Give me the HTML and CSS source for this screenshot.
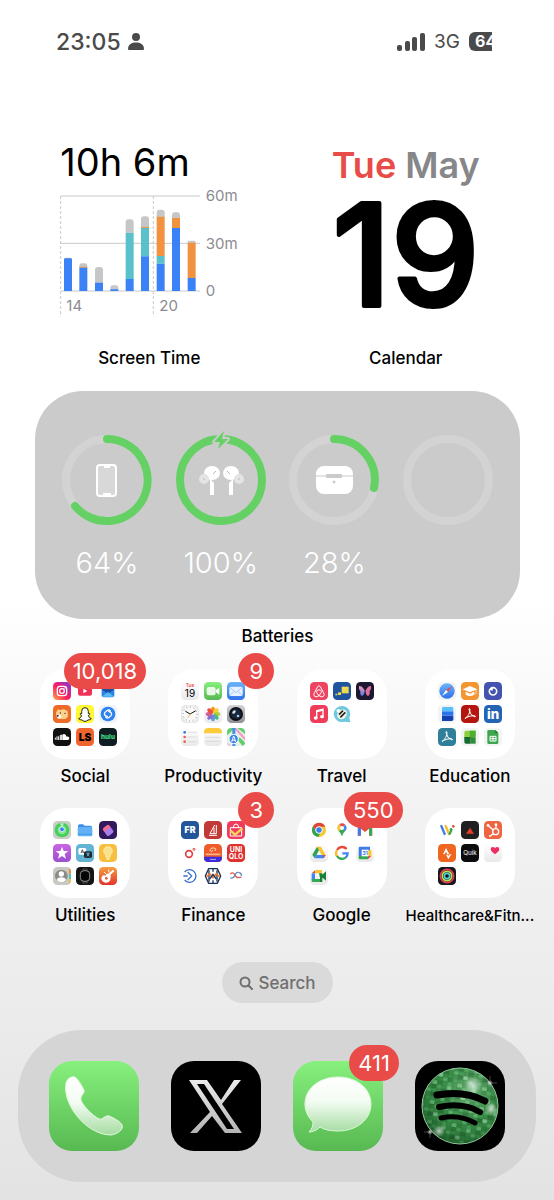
FILE: index.html
```html
<!DOCTYPE html>
<html lang="en">
<head>
<meta charset="utf-8">
<meta name="viewport" content="width=device-width, initial-scale=1">
<title>Home Screen</title>
<link rel="stylesheet" href="styles.css">
</head>
<body>
<svg class="defs" aria-hidden="true">
  <defs>
    <linearGradient id="insta" x1="0" y1="1" x2="1" y2="0"><stop offset="0" stop-color="#fcb045"/><stop offset=".45" stop-color="#fd1d5d"/><stop offset="1" stop-color="#7a3ae0"/></linearGradient>
    <linearGradient id="green" x1="0" y1="0" x2="0" y2="1"><stop offset="0" stop-color="#86f07d"/><stop offset="1" stop-color="#58b952"/></linearGradient>
    <linearGradient id="blue" x1="0" y1="0" x2="0" y2="1"><stop offset="0" stop-color="#6db4fa"/><stop offset="1" stop-color="#2f72ea"/></linearGradient>
    <linearGradient id="paper" x1="0" y1="0" x2="0" y2="1"><stop offset="0" stop-color="#fff"/><stop offset="1" stop-color="#e9e9ea"/></linearGradient>
    <linearGradient id="silver" x1="0" y1="0" x2="0" y2="1"><stop offset="0" stop-color="#d5d5d8"/><stop offset="1" stop-color="#8f8f95"/></linearGradient>
    <linearGradient id="glass" x1="0" y1="0" x2="0" y2="1"><stop offset="0" stop-color="#fff"/><stop offset=".45" stop-color="#f3fcf2"/><stop offset="1" stop-color="#a5dca1"/></linearGradient>
    <linearGradient id="chrome" x1="0" y1="0" x2="0" y2="1"><stop offset="0" stop-color="#ececec"/><stop offset="1" stop-color="#b4b4b4"/></linearGradient>
    <linearGradient id="violet" x1="0" y1="0" x2="0" y2="1"><stop offset="0" stop-color="#c964e4"/><stop offset="1" stop-color="#9a4fd0"/></linearGradient>
    <linearGradient id="wing" x1="0" y1="0" x2="0" y2="1"><stop offset="0" stop-color="#f79ab0"/><stop offset="1" stop-color="#5577f0"/></linearGradient>
    <linearGradient id="garage" x1="0" y1="0" x2="0" y2="1"><stop offset="0" stop-color="#f5a040"/><stop offset="1" stop-color="#e2342c"/></linearGradient>
    <radialGradient id="ball" cx=".62" cy=".32" r=".8"><stop offset="0" stop-color="#bff5c8" stop-opacity=".45"/><stop offset=".5" stop-color="#3f9e50" stop-opacity=".2"/><stop offset="1" stop-color="#03260c" stop-opacity=".65"/></radialGradient>
    <radialGradient id="glow"><stop offset="0" stop-color="#fff" stop-opacity=".7"/><stop offset="1" stop-color="#fff" stop-opacity="0"/></radialGradient>
    <pattern id="tiles" width="25" height="20" patternUnits="userSpaceOnUse" patternTransform="rotate(8)">
      <rect width="25" height="20" fill="#348643"/>
      <rect width="5" height="4" fill="#4ba25b"/><rect x="10" width="5" height="4" fill="#7cc188"/><rect x="20" width="5" height="4" fill="#26702f"/>
      <rect x="5" y="4" width="5" height="4" fill="#246630"/><rect x="15" y="4" width="5" height="4" fill="#5eb26d"/><rect x="20" y="4" width="5" height="4" fill="#3b9149"/>
      <rect y="8" width="5" height="4" fill="#8fd09a"/><rect x="10" y="8" width="5" height="4" fill="#2e8c40"/><rect x="20" y="8" width="5" height="4" fill="#215f2c"/>
      <rect x="5" y="12" width="5" height="4" fill="#57ad66"/><rect x="10" y="12" width="5" height="4" fill="#266b33"/><rect x="15" y="12" width="5" height="4" fill="#3d984c"/>
      <rect y="16" width="5" height="4" fill="#2a7638"/><rect x="10" y="16" width="5" height="4" fill="#48a058"/><rect x="20" y="16" width="5" height="4" fill="#6bb878"/>
      <path d="M0 0H25M0 4H25M0 8H25M0 12H25M0 16H25M0 0V20M5 0V20M10 0V20M15 0V20M20 0V20" stroke="#1b5527" stroke-width=".4"/>
    </pattern>
    <g id="petals">
      <ellipse cx="27" cy="15" rx="6" ry="10" fill="#f7941d"/>
      <ellipse cx="27" cy="15" rx="6" ry="10" fill="#f4d035" transform="rotate(45 27 27)"/>
      <ellipse cx="27" cy="15" rx="6" ry="10" fill="#b0cf3a" transform="rotate(90 27 27)"/>
      <ellipse cx="27" cy="15" rx="6" ry="10" fill="#4fb783" transform="rotate(135 27 27)"/>
      <ellipse cx="27" cy="15" rx="6" ry="10" fill="#5b9be0" transform="rotate(180 27 27)"/>
      <ellipse cx="27" cy="15" rx="6" ry="10" fill="#8a6fd0" transform="rotate(225 27 27)"/>
      <ellipse cx="27" cy="15" rx="6" ry="10" fill="#d15c9f" transform="rotate(270 27 27)"/>
      <ellipse cx="27" cy="15" rx="6" ry="10" fill="#ee4e3e" transform="rotate(315 27 27)"/>
    </g>
  </defs>
</svg>

<header class="status">
  <time class="status-time">23:05</time>
  <svg class="person" viewBox="0 0 16 17" aria-label="Focus"><circle cx="8" cy="4" r="4"/><path d="M0 16C0 11 4 9.500 8 9.500S16 11 16 16Q16 17 15 17H1Q0 17 0 16Z"/></svg>
  <div class="status-right">
    <svg class="signal" viewBox="0 0 28 18" aria-label="Signal"><rect y="12" width="5" height="6" rx="2"/><rect x="8" y="8" width="5" height="10" rx="2"/><rect x="15" y="4" width="5" height="14" rx="2"/><rect x="23" width="5" height="18" rx="2"/></svg>
    <span class="network">3G</span>
    <span class="battery">64</span>
  </div>
</header>

<main class="home">
  <section class="widgets">
    <figure class="cell">
      <div class="widget screen-time">
        <div class="total">10h 6m</div>
        <svg class="chart" viewBox="0 -18 567 402" role="img" aria-label="Usage per day">
          <path class="grid-line" d="M2 15H420M2 157H420M2 300H420"/>
          <path class="grid-dash" d="M2 15V376M280 15V376"/>
          <path class="other" d="M12 212V206Q12 200 18 200H30Q36 200 36 206V212ZM58 230V224Q58 217 65 217H75Q82 217 82 224V230ZM105 276V237Q105 228 114 228H120Q129 228 129 237V276ZM151 296V290Q151 283 158 283H168Q175 283 175 290V296ZM197 126V94Q197 85 206 85H212Q221 85 221 94V126ZM243 110V85Q243 76 252 76H258Q267 76 267 85V110ZM290 78V65Q290 56 299 56H305Q314 56 314 65V78ZM336 82V73Q336 64 345 64H351Q360 64 360 73V82ZM383 156V153Q383 149 389 149H401Q407 149 407 153V156Z"/>
          <path class="teal" d="M197 126H221V265H197ZM243 111H267V196H243ZM290 195H314V218H290Z"/>
          <path class="orange" d="M58 227H82V230H58ZM243 108H267V111H243ZM290 77H314V195H290ZM336 81H360V111H336ZM383 155H407V261H383Z"/>
          <path class="use" d="M12 300V206Q12 202 16 202H32Q36 202 36 206V300ZM58 230H82V300H58ZM105 275H129V300H105ZM151 295H175V300H151ZM197 264H221V300H197ZM243 196H267V300H243ZM290 218H314V300H290ZM336 111H360V300H336ZM383 261H407V300H383Z"/>
          <text x="437" y="31">60m</text><text x="437" y="174">30m</text><text x="437" y="316">0</text>
          <text x="19" y="361">14</text><text x="298" y="361">20</text>
        </svg>
      </div>
      <figcaption class="label">Screen Time</figcaption>
    </figure>
    <figure class="cell">
      <div class="widget calendar">
        <div class="month"><span class="weekday">Tue</span> May</div>
        <svg class="day" viewBox="0 0 228 130"><text x="114" y="118">19</text></svg>
      </div>
      <figcaption class="label">Calendar</figcaption>
    </figure>
  </section>

  <figure class="cell batteries-cell">
    <div class="batteries">
      <div class="device">
        <svg class="ring" viewBox="0 0 90 90" aria-hidden="true"><circle class="track" cx="45" cy="45" r="41"/><path class="level" d="M45 4A41 41 0 1 1 13 71"/><rect x="35" y="30" width="19" height="31" rx="3" fill="#d8d8d8" stroke="#fff" stroke-width="2"/><path d="M42 32H48M41 59H49" stroke="#fff" stroke-width="2"/></svg>
        <span class="percent">64%</span>
      </div>
      <div class="device">
        <svg class="ring" viewBox="0 0 90 90" aria-hidden="true"><circle class="level" cx="45" cy="45" r="41"/>
          <path class="bolt" d="M48-4 38 7H44L42 14 52 4H46Z"/>
          <g id="bud"><ellipse cx="36" cy="38" rx="8" ry="7" fill="#fff"/><path d="M34 44Q38 48 38 48V60H34Z" fill="#fff"/><circle cx="28" cy="44" r="5" fill="#e4e4e4"/><path d="M37 39 40 36M27 43 29 45" stroke="#bbb" stroke-width="1"/></g>
          <use href="#bud" transform="translate(91 0) scale(-1 1)"/></svg>
        <span class="percent">100%</span>
      </div>
      <div class="device">
        <svg class="ring" viewBox="0 0 90 90" aria-hidden="true"><circle class="track" cx="45" cy="45" r="41"/><path class="level" d="M45 4A41 41 0 0 1 85 53"/><rect x="27" y="31" width="37" height="28" rx="8" fill="#fff"/><path d="M27 41H64" stroke="#cbcbcb"/><rect x="37" y="39" width="16" height="4" rx="1" fill="#cbcbcb"/><circle cx="45" cy="47" r="1.500" fill="#cbcbcb"/></svg>
        <span class="percent">28%</span>
      </div>
      <div class="device">
        <svg class="ring" viewBox="0 0 90 90" aria-hidden="true"><circle class="track" cx="45" cy="45" r="41"/></svg>
      </div>
    </div>
    <figcaption class="label">Batteries</figcaption>
  </figure>

  <nav class="folders" aria-label="Folders">
    <button class="cell" type="button">
      <span class="folder">
        <svg viewBox="0 0 54 54"><rect width="54" height="54" rx="13" fill="url(#insta)"/><rect x="13" y="13" width="28" height="28" rx="8" fill="none" stroke="#fff" stroke-width="4"/><circle cx="27" cy="27" r="7" fill="none" stroke="#fff" stroke-width="4"/><circle cx="36" cy="18" r="2" fill="#fff"/></svg>
        <svg viewBox="0 0 54 54"><path d="M6 12H48V35Q48 41 42 41H12Q6 41 6 35Z" fill="#ef3356"/><path d="M22 20 34 27 22 34Z" fill="#fff"/></svg>
        <svg viewBox="0 0 54 54"><path d="M8 14H46V40Q46 46 40 46H14Q8 46 8 40Z" fill="#2a84e6"/><path d="M8 22 27 36 46 22V14H8Z" fill="#1b4fa0"/><path d="M8 44 27 30 46 44Z" fill="#55bdf5"/></svg>
        <svg viewBox="0 0 54 54"><rect width="54" height="54" rx="13" fill="#ee6a28"/><path d="M9 23 15 13 22 16Q32 9 38 16Q45 16 44 24Q48 38 36 42H21Q10 40 10 29Z" fill="#fbd28b"/><path d="M10 30Q18 25 25 33 24 41 15 41Z" fill="#fff"/><circle cx="22" cy="24" r="2" fill="#43220e"/><circle cx="36" cy="25" r="2" fill="#43220e"/><circle cx="14" cy="32" r="3" fill="#43220e"/></svg>
        <svg viewBox="0 0 54 54"><rect width="54" height="54" rx="13" fill="#fdf735"/><path d="M27 8Q37 8 37 19V26Q43 24 41 29L37 32Q39 39 46 41 42 45 36 45 32 49 27 49 22 49 18 45 12 45 8 41 15 39 17 32L13 29Q11 24 17 26V19Q17 8 27 8Z" fill="#fff" stroke="#222" stroke-width="3" stroke-linejoin="round"/></svg>
        <svg viewBox="0 0 54 54"><rect width="54" height="54" rx="13" fill="#eef3fb"/><circle cx="27" cy="27" r="22" fill="#2c82ee"/><path d="M25 34Q12 31 18 22L25 16Q31 13 34 18M29 20Q42 23 36 32L29 38Q23 41 20 36" fill="none" stroke="#fff" stroke-width="4" stroke-linecap="round"/></svg>
        <svg viewBox="0 0 54 54"><rect width="54" height="54" rx="13" fill="#111"/><path d="M28 36V20Q37 14 41 26 49 24 49 31 49 36 44 36Z" fill="#fff"/><path d="M7 29V35M12 25V36M17 25V36M22 21V36M26 20V36" stroke="#fff" stroke-width="3"/></svg>
        <svg viewBox="0 0 54 54"><rect width="54" height="54" rx="13" fill="#f0642e"/><text class="t-ls" x="27" y="38">LS</text></svg>
        <svg viewBox="0 0 54 54"><rect width="54" height="54" rx="13" fill="#101d22"/><text class="t-hulu" x="27" y="32">hulu</text></svg>
        <span class="badge">10,018</span>
      </span>
      <span class="label">Social</span>
    </button>

    <button class="cell" type="button">
      <span class="folder">
        <svg viewBox="0 0 54 54"><rect width="54" height="54" rx="13" fill="url(#paper)"/><text class="t-tue" x="27" y="15">Tue</text><text class="t-19" x="27" y="44">19</text></svg>
        <svg viewBox="0 0 54 54"><rect width="54" height="54" rx="13" fill="url(#green)"/><rect x="8" y="15" width="27" height="25" rx="7" fill="#e9fbe8"/><path d="M36 24 46 17V38L36 31Z" fill="#fff"/></svg>
        <svg viewBox="0 0 54 54"><rect width="54" height="54" rx="13" fill="url(#blue)"/><rect x="7" y="14" width="40" height="28" rx="5" fill="#e6f2ff"/><path d="M8 16 27 32 46 16M8 41 21 28M46 41 33 28" fill="none" stroke="#8cb9ef" stroke-width="2"/></svg>
        <svg viewBox="0 0 54 54"><rect width="54" height="54" rx="13" fill="#e9e9ea"/><circle cx="27" cy="27" r="24" fill="#fafafa"/><circle cx="27" cy="27" r="21" fill="none" stroke="#555" stroke-width="3" stroke-dasharray="2 9"/><path d="M14 19 27 27 43 18" fill="none" stroke="#111" stroke-width="3" stroke-linecap="round"/><path d="M30 24 20 39" stroke="#ef9a2d" stroke-width="2"/></svg>
        <svg viewBox="0 0 54 54"><rect width="54" height="54" rx="13" fill="url(#paper)"/><use href="#petals"/></svg>
        <svg viewBox="0 0 54 54"><rect width="54" height="54" rx="13" fill="url(#silver)"/><circle cx="27" cy="27" r="21" fill="#101217"/><circle cx="27" cy="27" r="15" fill="#16273b"/><ellipse cx="21" cy="21" rx="6" ry="4" fill="#d6e6f5" transform="rotate(-45 21 21)"/><circle cx="33" cy="33" r="4" fill="#a9c5e4"/></svg>
        <svg viewBox="0 0 54 54"><rect width="54" height="54" rx="13" fill="url(#paper)"/><circle cx="11" cy="13" r="4" fill="#3076e8"/><circle cx="11" cy="27" r="4" fill="#e5654f"/><circle cx="11" cy="41" r="4" fill="#e5654f"/><path d="M20 13H48M20 27H48M20 41H48" stroke="#d2d2d4" stroke-width="2"/></svg>
        <svg viewBox="0 0 54 54"><rect width="54" height="54" rx="13" fill="url(#paper)"/><path d="M0 16V13Q0 0 13 0H41Q54 0 54 13V16Z" fill="#fccb3c"/><path d="M6 28H48M6 40H48" stroke="#cfcfd2" stroke-width="2"/></svg>
        <svg viewBox="0 0 54 54"><rect width="54" height="54" rx="13" fill="#e6efe4"/><path d="M13 0H25L0 22V13Q0 0 13 0ZM31 0H43Q54 2 54 13V18Z" fill="#5fcf6b"/><path d="M28 0 54 28V38L20 0ZM0 44 12 54Q0 54 0 41Z" fill="#f09bc9"/><path d="M38 28 54 44V48L47 54 32 36Z" fill="#5fcf6b"/><path d="M16 0H25V54H16Z" fill="#3f8df2"/><circle cx="20" cy="33" r="14" fill="#3a86ee" stroke="#fff" stroke-width="3"/><path d="M20 24 26 40 20 36 14 40Z" fill="none" stroke="#fff" stroke-width="3" stroke-linejoin="round"/></svg>
        <span class="badge">9</span>
      </span>
      <span class="label">Productivity</span>
    </button>

    <button class="cell" type="button">
      <span class="folder">
        <svg viewBox="0 0 54 54"><rect width="54" height="54" rx="13" fill="#ee4461"/><path d="M27 41Q16 29 22 25 27 22 32 25 38 29 27 41 17 49 12 41 10 38 14 31L23 14Q27 8 31 14L40 31Q44 38 42 41 37 49 27 41Z" fill="none" stroke="#fff" stroke-width="3"/></svg>
        <svg viewBox="0 0 54 54"><rect width="54" height="54" rx="13" fill="#20549f"/><rect x="26" y="14" width="21" height="20" fill="#efd94e"/><rect x="15" y="31" width="9" height="8" fill="#efd94e"/><rect x="7" y="35" width="6" height="5" fill="#d0cf70"/></svg>
        <svg viewBox="0 0 54 54"><rect width="54" height="54" rx="13" fill="#1c1830"/><path d="M26 25Q18 11 9 12 7 20 13 28 11 37 17 42 25 40 26 28Z" fill="url(#wing)"/><path d="M29 25Q36 11 45 12 47 20 41 28 43 37 37 42 29 40 29 28Z" fill="#df6f9c"/></svg>
        <svg viewBox="0 0 54 54"><rect width="54" height="54" rx="13" fill="#ef3c59"/><path d="M20 39V17L39 12V34" fill="none" stroke="#fff" stroke-width="4"/><path d="M20 20 39 15" stroke="#fff" stroke-width="4"/><ellipse cx="17" cy="39" rx="6" ry="5" fill="#fff"/><ellipse cx="36" cy="35" rx="6" ry="5" fill="#fff"/></svg>
        <svg viewBox="0 0 54 54"><path d="M27 3A24 24 0 1 0 33 50L52 52 49 38A24 24 0 0 0 27 3Z" fill="#6ec9de"/><ellipse cx="27" cy="28" rx="13" ry="16" fill="#f8f5e6" transform="rotate(45 27 28)"/><path d="M18 29 30 17M22 37 37 22" stroke="#222" stroke-width="5"/><path d="M11 14Q17 9 22 16L15 23Q9 20 11 14Z" fill="#fff"/></svg>
      </span>
      <span class="label">Travel</span>
    </button>

    <button class="cell" type="button">
      <span class="folder">
        <svg viewBox="0 0 54 54"><rect width="54" height="54" rx="13" fill="#f4f4f5"/><circle cx="27" cy="27" r="23" fill="url(#blue)"/><path d="M42 12 30 30 24 24Z" fill="#ec4a3e"/><path d="M12 42 24 24 30 30Z" fill="#fff"/></svg>
        <svg viewBox="0 0 54 54"><rect width="54" height="54" rx="13" fill="#f39530"/><path d="M5 22 27 12 49 22 27 31Z" fill="#fff"/><path d="M14 29V38Q27 46 40 38V29L27 35Z" fill="#fff"/><path d="M45 24V37" stroke="#fff" stroke-width="2"/></svg>
        <svg viewBox="0 0 54 54"><rect width="54" height="54" rx="13" fill="#4453b0"/><circle cx="27" cy="28" r="11" fill="none" stroke="#fff" stroke-width="5"/><path d="M16 22 27 28 26 16" fill="#fff"/><circle cx="30" cy="25" r="4" fill="#4453b0"/></svg>
        <svg viewBox="0 0 54 54"><rect width="54" height="54" rx="13" fill="#f1f3f6"/><path d="M15 6H42Q46 6 46 12V19H12V11Q12 6 15 6Z" fill="#58c0f7"/><path d="M12 19H46V32H12Z" fill="#2b75ea"/><path d="M12 32H46V43Q46 48 41 48H12Z" fill="#163fb4"/></svg>
        <svg viewBox="0 0 54 54"><rect width="54" height="54" rx="13" fill="#b4160f"/><path d="M12 41Q27 30 27 12 24 8 24 14 27 31 42 36 46 34 40 32 26 32 15 38 10 42 12 41Z" fill="none" stroke="#fff" stroke-width="3"/></svg>
        <svg viewBox="0 0 54 54"><rect width="54" height="54" rx="13" fill="#2563b5"/><text class="t-in" x="27" y="42">in</text></svg>
        <svg viewBox="0 0 54 54"><rect width="54" height="54" rx="13" fill="#2f7f9b"/><path d="M12 41Q27 30 27 12 24 8 24 14 27 31 42 36 46 34 40 32 26 32 15 38 10 42 12 41Z" fill="none" stroke="#fff" stroke-width="3"/></svg>
        <svg viewBox="0 0 54 54"><rect width="54" height="54" rx="13" fill="#f1f4f0"/><path d="M14 8H44V25L34 34H10V12Z" fill="#8ed03a"/><path d="M26 8H44V28H26Z" fill="#4fae34"/><path d="M10 27H29V47H15Q10 47 10 42Z" fill="#176b32"/><path d="M29 28H44V47H29Z" fill="#2f8c3b"/></svg>
        <svg viewBox="0 0 54 54"><rect width="54" height="54" rx="13" fill="#f3f5f3"/><path d="M14 6H34L43 15V44Q43 48 39 48H14Q10 48 10 44V10Q10 6 14 6Z" fill="#3fa650"/><path d="M34 6 43 15H34Z" fill="#1d7a36"/><path d="M18 25H36V39H18ZM18 32H36M27 25V39" fill="none" stroke="#fff" stroke-width="3"/></svg>
      </span>
      <span class="label">Education</span>
    </button>

    <button class="cell" type="button">
      <span class="folder">
        <svg viewBox="0 0 54 54"><rect width="54" height="54" rx="13" fill="#c9cdc6"/><circle cx="27" cy="27" r="22" fill="#45cf5b"/><circle cx="27" cy="27" r="13" fill="#8be597"/><path d="M21 7H33L27 22Z" fill="#b7f1bd"/><circle cx="27" cy="25" r="7" fill="#2f83ea" stroke="#fff" stroke-width="2"/></svg>
        <svg viewBox="0 0 54 54"><path d="M6 15Q6 10 11 10H21L26 14H44Q48 14 48 19V24H6Z" fill="#3b8fe8"/><rect x="5" y="18" width="44" height="28" rx="5" fill="#62b1f6"/><path d="M6 40H48" stroke="#3c8ee2" stroke-width="2"/></svg>
        <svg viewBox="0 0 54 54"><rect width="54" height="54" rx="13" fill="#31195e"/><rect x="13" y="13" width="24" height="18" rx="6" fill="#ee6d93" transform="rotate(-38 27 24)"/><rect x="18" y="24" width="24" height="18" rx="6" fill="#a77cec" transform="rotate(-38 30 32)"/></svg>
        <svg viewBox="0 0 54 54"><rect width="54" height="54" rx="13" fill="url(#violet)"/><path d="M27 8 32 21H46L35 30 39 44 27 36 15 44 19 30 8 21H22Z" fill="#fff"/></svg>
        <svg viewBox="0 0 54 54"><rect width="54" height="54" rx="13" fill="#62b3d4"/><rect x="7" y="12" width="24" height="20" rx="5" fill="#fff"/><rect x="24" y="22" width="24" height="20" rx="5" fill="#1c2b35"/><path d="M15 27 19 17 23 27M16 24H22" stroke="#224" stroke-width="2" fill="none"/><path d="M31 28H41M36 25V28M32 37 40 29M32 29 40 37" stroke="#7fd4f1" stroke-width="2"/></svg>
        <svg viewBox="0 0 54 54"><rect width="54" height="54" rx="13" fill="#f6bf3d"/><path d="M27 8A13 13 0 0 1 34 32V38H20V32A13 13 0 0 1 27 8Z" fill="#fbe08c" stroke="#fff3c4" stroke-width="2"/><path d="M21 42H33M23 46H31" stroke="#fff3c4" stroke-width="3"/></svg>
        <svg viewBox="0 0 54 54"><rect width="54" height="54" rx="13" fill="#c9c9c2"/><path d="M48 4Q54 7 54 13V20H48Z" fill="#ee8e3c"/><path d="M48 20H54V36H48Z" fill="#53c5b8"/><path d="M48 36H54V42Q53 48 48 51Z" fill="#e9c247"/><circle cx="25" cy="27" r="19" fill="#8b8b88"/><circle cx="25" cy="21" r="8" fill="#fff"/><path d="M11 39Q13 31 25 31T39 39Q34 46 25 46T11 39Z" fill="#fff"/></svg>
        <svg viewBox="0 0 54 54"><rect width="54" height="54" rx="13" fill="#141414"/><path d="M19 4H35L37 13H17ZM17 41H37L35 50H19Z" fill="#333"/><rect x="13" y="11" width="28" height="32" rx="11" fill="#050505" stroke="#8f8f8f" stroke-width="3"/></svg>
        <svg viewBox="0 0 54 54"><rect width="54" height="54" rx="13" fill="url(#garage)"/><path d="M8 29Q13 22 20 26 23 18 28 20L42 8 46 12 34 24Q38 26 34 33 37 39 29 45 17 50 10 42 5 36 8 29Z" fill="#fff"/><circle cx="22" cy="34" r="4" fill="#e45331"/><path d="M15 15 22 22M29 8 30 16" stroke="#fff" stroke-width="3"/></svg>
      </span>
      <span class="label">Utilities</span>
    </button>

    <button class="cell" type="button">
      <span class="folder">
        <svg viewBox="0 0 54 54"><rect width="54" height="54" rx="13" fill="#23559b"/><text class="t-fr" x="27" y="36">FR</text></svg>
        <svg viewBox="0 0 54 54"><rect width="54" height="54" rx="13" fill="#c23a37"/><path d="M32 12 18 38H37V12" fill="none" stroke="#fff" stroke-width="3"/><path d="M30 20V37M15 43H39" stroke="#fff" stroke-width="3"/></svg>
        <svg viewBox="0 0 54 54"><rect width="54" height="54" rx="13" fill="#ee3c5c"/><path d="M10 20H44V45H10Z" fill="none" stroke="#fff" stroke-width="3"/><path d="M19 20Q19 9 27 9T35 20" fill="none" stroke="#fff" stroke-width="3"/><path d="M11 29 24 41 46 22" fill="none" stroke="#f6d35b" stroke-width="7"/></svg>
        <svg viewBox="0 0 54 54"><circle cx="24" cy="30" r="10" fill="none" stroke="#e4403f" stroke-width="5"/><circle cx="39" cy="16" r="3" fill="none" stroke="#e4403f" stroke-width="3"/></svg>
        <svg viewBox="0 0 54 54"><rect width="54" height="54" rx="13" fill="#ee5c2b"/><path d="M0 38H54V41Q54 54 41 54H13Q0 54 0 41Z" fill="#3d2bd8"/><path d="M18 22Q18 11 29 12T32 21M26 18 22 24" fill="none" stroke="#ffe1c5" stroke-width="3"/><path d="M5 31H49" stroke="#f7b28c" stroke-width="5"/><path d="M18 46H36" stroke="#b7aff2" stroke-width="3"/></svg>
        <svg viewBox="0 0 54 54"><rect width="54" height="54" rx="13" fill="#df302c"/><text class="t-uni" x="27" y="25">UNI</text><text class="t-uni" x="27" y="46">QLO</text></svg>
        <svg viewBox="0 0 54 54"><path d="M11 15A19 19 0 1 1 11 39M7 27H20M20 15 32 27 20 39" fill="none" stroke="#3770c8" stroke-width="4"/></svg>
        <svg viewBox="0 0 54 54"><path d="M14 5H40L50 27 40 49H14L4 27Z" fill="none" stroke="#18335c" stroke-width="4"/><path d="M15 10V44M39 10V44M27 5V14M27 40V49" stroke="#18335c" stroke-width="4"/><path d="M7 30 17 20 27 32 37 20 47 30" fill="none" stroke="#ec7a35" stroke-width="5"/><path d="M17 36 27 22 37 36" fill="none" stroke="#18335c" stroke-width="4"/></svg>
        <svg viewBox="0 0 54 54"><path d="M10 21Q18 13 23 23T35 32 43 30" fill="none" stroke="#e05a4d" stroke-width="4"/><path d="M10 33Q20 35 24 24T37 17Q44 19 43 27" fill="none" stroke="#6d8fbd" stroke-width="4"/></svg>
        <span class="badge">3</span>
      </span>
      <span class="label">Finance</span>
    </button>

    <button class="cell" type="button">
      <span class="folder">
        <svg viewBox="0 0 54 54"><circle cx="27" cy="27" r="21" fill="#f7c92e"/><path d="M9 16A21 21 0 0 1 46 17H27L19 32Z" fill="#e04437"/><path d="M9 16 19 32 31 35 25 48A21 21 0 0 1 9 16Z" fill="#2fa352"/><circle cx="27" cy="27" r="10" fill="#3f7ee8" stroke="#fff" stroke-width="3"/></svg>
        <svg viewBox="0 0 54 54"><path d="M27 46Q24 36 17 30L27 21 38 28Q29 37 27 46Z" fill="#34a853"/><path d="M13 24A15 15 0 0 1 19 9L27 21 17 31Q13 28 13 24Z" fill="#f9c331"/><path d="M19 9A15 15 0 0 1 37 11L27 21Z" fill="#e84a3c"/><path d="M37 11A15 15 0 0 1 38 29L27 21Z" fill="#4285f4"/><circle cx="27" cy="21" r="6" fill="#fff"/></svg>
        <svg viewBox="0 0 54 54"><path d="M10 44V14L27 27 44 14V44" fill="none" stroke="#e84a3c" stroke-width="9"/><path d="M10 20V44" stroke="#3f7ee8" stroke-width="9"/><path d="M44 20V44" stroke="#34a853" stroke-width="9"/></svg>
        <svg viewBox="0 0 54 54"><rect width="54" height="54" rx="13" fill="url(#paper)"/><path d="M21 8H33L47 33H35Z" fill="#f9c331"/><path d="M21 8 27 19 14 43 7 32Z" fill="#2fa352"/><path d="M19 33H47L41 43H14Z" fill="#4285f4"/><path d="M40 33H47L41 43Z" fill="#e84a3c"/></svg>
        <svg viewBox="0 0 54 54"><path d="M41 15A18 18 0 0 0 12 18" fill="none" stroke="#e84a3c" stroke-width="7"/><path d="M12 18A18 18 0 0 0 12 37" fill="none" stroke="#f9bd2e" stroke-width="7"/><path d="M12 36A18 18 0 0 0 38 41" fill="none" stroke="#34a853" stroke-width="7"/><path d="M38 41Q44 36 44 28H28" fill="none" stroke="#4285f4" stroke-width="7"/></svg>
        <svg viewBox="0 0 54 54"><rect width="54" height="54" rx="13" fill="url(#paper)"/><path d="M12 8H42V18H18V36H8V12Q8 8 12 8Z" fill="#3f7ee8"/><path d="M36 18H46V36H36Z" fill="#f9c331"/><path d="M8 36H36V46H12Q8 46 8 42Z" fill="#34a853"/><path d="M36 36H46L36 46Z" fill="#e84a3c"/><path d="M17 17H37V37H17Z" fill="#fff"/><text class="t-31" x="27" y="33">31</text></svg>
        <svg viewBox="0 0 54 54"><rect width="54" height="54" rx="13" fill="url(#paper)"/><path d="M5 19 16 9V19Z" fill="#e84a3c"/><path d="M5 19H15V38H5Z" fill="#4285f4"/><path d="M16 9H36V19H16Z" fill="#f9c331"/><path d="M5 36H36V45H9Q5 45 5 41Z" fill="#34a853"/><path d="M27 19H37V45H30V32ZM36 24 48 13V41L36 31Z" fill="#188038"/></svg>
        <span class="badge">550</span>
      </span>
      <span class="label">Google</span>
    </button>

    <button class="cell" type="button">
      <span class="folder">
        <svg viewBox="0 0 54 54"><path d="M10 15 20 39" stroke="#3f7ee8" stroke-width="7" stroke-linecap="round"/><path d="M23 15 33 39" stroke="#f7bb30" stroke-width="7" stroke-linecap="round"/><path d="M35 38 40 28" stroke="#34a853" stroke-width="7" stroke-linecap="round"/><circle cx="46" cy="16" r="4" fill="#e84a3c"/><circle cx="39" cy="25" r="4" fill="#34a853"/></svg>
        <svg viewBox="0 0 54 54"><rect width="54" height="54" rx="13" fill="#202023"/><path d="M27 20 39 38H15Z" fill="#e53e2c"/></svg>
        <svg viewBox="0 0 54 54"><rect width="54" height="54" rx="13" fill="#ee6542"/><circle cx="35" cy="32" r="9" fill="none" stroke="#fff" stroke-width="4"/><path d="M36 22V12M28 27 13 14M28 38 19 45" stroke="#fff" stroke-width="4"/><circle cx="36" cy="11" r="4" fill="#fff"/><circle cx="12" cy="13" r="4" fill="#fff"/><circle cx="18" cy="45" r="3" fill="#fff"/></svg>
        <svg viewBox="0 0 54 54"><rect width="54" height="54" rx="13" fill="#f0651f"/><path d="M15 31 24 12 34 31H28L24 23 20 31Z" fill="#fff"/><path d="M24 32H29L31 36 35 31H40L31 46Z" fill="#fff"/></svg>
        <svg viewBox="0 0 54 54"><rect width="54" height="54" rx="13" fill="#0c0c0e"/><text class="t-quik" x="27" y="32">Quik</text></svg>
        <svg viewBox="0 0 54 54"><rect width="54" height="54" rx="13" fill="url(#paper)"/><path d="M33 31Q20 22 20 16 20 9 27 9 31 9 33 13 35 9 39 9 46 9 46 16 46 22 33 31Z" fill="#ee2f64"/></svg>
        <svg viewBox="0 0 54 54"><rect width="54" height="54" rx="13" fill="#17171a"/><circle cx="27" cy="27" r="20" fill="none" stroke="#e53b57" stroke-width="5"/><circle cx="27" cy="27" r="14" fill="none" stroke="#b5e34c" stroke-width="5"/><circle cx="27" cy="27" r="8" fill="none" stroke="#4fcfd8" stroke-width="5"/></svg>
      </span>
      <span class="label long">Healthcare&amp;Fitn...</span>
    </button>
  </nav>

  <button class="search" type="button">
    <svg viewBox="0 0 14 14" aria-hidden="true"><circle cx="6" cy="6" r="4.500"/><path d="M9.500 9.500 13 13"/></svg>
    Search
  </button>
</main>

<footer class="dock">
  <button class="app" type="button" aria-label="Phone">
    <svg viewBox="0 0 90 90"><rect width="90" height="90" rx="23" fill="url(#green)"/><path d="M17 22C18 18 22 15 26 16C29 18 33 25 35 29C36 33 31 34 32 39C34 45 43 54 50 58C54 59 56 54 60 55C65 57 72 61 73 64C75 69 68 73 62 74C38 74 13 44 17 22Z" fill="url(#glass)" stroke="#e2f8e0"/></svg>
  </button>
  <button class="app" type="button" aria-label="X">
    <svg viewBox="0 0 90 90"><rect width="90" height="90" rx="23"/><path fill="url(#chrome)" fill-rule="evenodd" d="M18 19H36L50 39 63 19H70L51 43 71 72H54L41 55 26 72H19L39 51ZM26 23 56 68H63L33 23Z"/></svg>
  </button>
  <button class="app" type="button" aria-label="Messages">
    <svg viewBox="0 0 90 90"><rect width="90" height="90" rx="23" fill="url(#green)"/><path d="M45 16C63 16 78 27 78 43S63 70 45 70C38 70 32 69 27 66 24 69 20 71 16 71 19 68 20 65 20 61 15 56 12 50 12 43 12 27 27 16 45 16Z" fill="url(#glass)" stroke="#dcf7da"/></svg>
    <span class="badge">411</span>
  </button>
  <button class="app" type="button" aria-label="Spotify">
    <svg viewBox="0 0 90 90"><rect width="90" height="90" rx="23"/><circle cx="45" cy="45" r="38" fill="url(#tiles)"/><circle cx="45" cy="45" r="38" fill="url(#ball)" stroke="#8fc79a"/><circle cx="58" cy="24" r="9" fill="url(#glow)"/><circle cx="76" cy="48" r="7" fill="url(#glow)"/><circle cx="24" cy="70" r="6" fill="url(#glow)"/><path d="M22 34Q49 29 70 40" class="wave" stroke-width="7"/><path d="M24 46Q47 41 65 51" class="wave" stroke-width="6"/><path d="M26 57Q44 53 60 62" class="wave" stroke-width="5"/><path d="M75 15V29M68 22H82M15 65V77M9 71H21" stroke="#7d8a80" stroke-width=".5"/><circle cx="75" cy="22" r="3" fill="url(#glow)"/><circle cx="15" cy="71" r="3" fill="url(#glow)"/></svg>
  </button>
</footer>
</body>
</html>
```
FILE: styles.css
```css
* {
  box-sizing: border-box;
}

body {
  margin: 0;
  min-height: 100vh;
  padding-bottom: 18px;
  font-family: Inter, "Liberation Sans", sans-serif;
  color: #000;
  background: linear-gradient(#fff 0%, #fff 50%, #f3f3f3 66%, #ebebeb 85%, #e3e3e3 100%);
}

button {
  padding: 0;
  border: 0;
  background: none;
  color: inherit;
  font: inherit;
}

figure {
  margin: 0;
}

svg {
  display: block;
}

.defs {
  position: absolute;
  width: 0;
  height: 0;
}

/* Status bar */

.status {
  display: flex;
  align-items: center;
  height: 83px;
  padding: 0 62px 0 56px;
  color: #4a4a4a;
  fill: #4a4a4a;
}

.status-time {
  font-size: 23px;
  font-weight: 500;
}

.person {
  width: 16px;
  height: 17px;
  margin-left: 7px;
}

.status-right {
  display: flex;
  align-items: center;
  margin-left: auto;
}

.signal {
  width: 28px;
  height: 18px;
}

.network {
  margin: 0 9px;
  font-size: 19px;
}

.battery {
  width: 23px;
  height: 19px;
  padding-left: 6px;
  overflow: hidden;
  border-radius: 6px 0 0 6px;
  background: #4a4a4a;
  color: #fff;
  font-size: 16px;
  font-weight: 700;
  line-height: 19px;
}

/* Home grid */

.home {
  display: flex;
  flex-direction: column;
  gap: 15px;
  padding: 30px 20px 0 21px;
}

.cell {
  display: flex;
  flex-direction: column;
  align-items: center;
  min-width: 0;
}

.label {
  font-size: 17px;
  font-weight: 500;
  line-height: 35px;
  white-space: nowrap;
}

.long {
  font-size: 15px;
}

.widgets {
  display: grid;
  grid-template-columns: 1fr 1fr;
}

.widget {
  width: 228px;
  height: 228px;
}

.screen-time {
  padding: 26px 14px 0 25px;
}

.total {
  font-size: 38px;
  line-height: 46px;
  white-space: nowrap;
}

.chart {
  width: 189px;
  height: 134px;
}

.chart text {
  fill: #8b8b90;
  font-size: 45px;
}

.grid-line {
  stroke: #c9c9cc;
  stroke-width: 3;
}

.grid-dash {
  stroke: #c9c9cc;
  stroke-width: 3;
  stroke-dasharray: 9 6;
}

.other {
  fill: #c6c6c9;
}

.teal {
  fill: #58c1cc;
}

.orange {
  fill: #f0923f;
}

.use {
  fill: #3b82f6;
}

.calendar {
  padding-top: 29px;
  text-align: center;
}

.month {
  color: #87878a;
  font-size: 36px;
  font-weight: 600;
  line-height: 46px;
}

.weekday {
  color: #e94b48;
}

.day {
  width: 100%;
  height: 130px;
  overflow: visible;
}

.day text {
  font-size: 141px;
  font-weight: 500;
  text-anchor: middle;
  stroke: #000;
  stroke-width: 4;
  stroke-linejoin: round;
}

/* Batteries */

.batteries-cell {
  padding: 0 14px;
}

.batteries {
  display: flex;
  justify-content: space-between;
  width: 100%;
  height: 228px;
  padding: 44px 27px 0;
  border-radius: 48px;
  background: #cbcbcb;
}

.device {
  display: flex;
  flex-direction: column;
  align-items: center;
  gap: 20px;
  width: 90px;
}

.ring {
  width: 90px;
  height: 90px;
  overflow: visible;
}

.track,
.level {
  fill: none;
  stroke: #d3d3d3;
  stroke-width: 8;
}

.level {
  stroke: #65d165;
  stroke-linecap: round;
}

.bolt {
  fill: #65d165;
  stroke: #cbcbcb;
  stroke-width: 4;
  stroke-linejoin: round;
  paint-order: stroke;
}

.percent {
  color: #fff;
  font-size: 29px;
  font-weight: 300;
  line-height: 36px;
}

/* Folders */

.folders {
  display: grid;
  grid-template-columns: repeat(4, minmax(0, 1fr));
  row-gap: 14px;
}

.folder {
  position: relative;
  display: grid;
  grid-template-columns: repeat(3, 18px);
  grid-auto-rows: 18px;
  gap: 5px;
  width: 90px;
  height: 90px;
  padding: 13px;
  border-radius: 26px;
  background: #fff;
}

.folder text {
  text-anchor: middle;
}

.t-ls {
  font-size: 31px;
  font-weight: 900;
}

.t-hulu {
  fill: #40dc86;
  font-size: 19px;
  font-weight: 800;
}

.t-tue {
  fill: #e94b48;
  font-size: 14px;
  font-weight: 600;
}

.t-19 {
  font-size: 30px;
}

.t-in {
  fill: #fff;
  font-size: 40px;
  font-weight: 800;
}

.t-fr {
  fill: #fff;
  font-size: 26px;
  font-weight: 900;
}

.t-uni {
  fill: #fff;
  font-size: 21px;
  font-weight: 700;
}

.t-31 {
  fill: #3f7ee8;
  font-size: 16px;
  font-weight: 700;
}

.t-quik {
  fill: #fff;
  font-size: 19px;
}

.badge {
  position: absolute;
  top: -16px;
  right: -16px;
  min-width: 36px;
  height: 36px;
  padding: 0 9px;
  border-radius: 18px;
  background: #e94b48;
  color: #fff;
  font-size: 22px;
  line-height: 36px;
  text-align: center;
}

/* Search and dock */

.search {
  display: flex;
  align-items: center;
  align-self: center;
  gap: 5px;
  height: 41px;
  margin-top: 14px;
  padding: 0 17px;
  border-radius: 21px;
  background: #dadada;
  color: #6f6f6f;
  font-size: 17px;
  font-weight: 500;
}

.search svg {
  width: 14px;
  height: 14px;
  fill: none;
  stroke: #6f6f6f;
  stroke-width: 2;
  stroke-linecap: round;
}

.dock {
  display: flex;
  justify-content: space-between;
  margin: 27px 18px 0;
  padding: 31px;
  border-radius: 64px;
  background: #d5d5d5;
}

.app {
  position: relative;
  width: 90px;
  height: 90px;
}

.wave {
  fill: none;
  stroke: #000;
  stroke-linecap: round;
}
```
